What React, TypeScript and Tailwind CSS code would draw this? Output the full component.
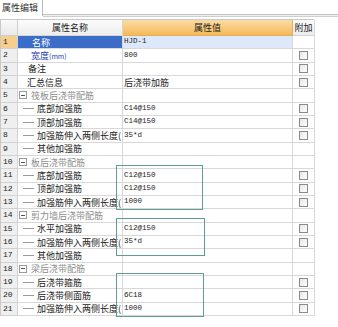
import React from "react";

type Row =
  | { kind: "item"; name: string; value?: string; nameColor?: string; check: boolean; selected?: boolean; indent: number }
  | { kind: "group"; name: string }
  | { kind: "child"; name: string; value?: string; check: boolean };

const LONG = "加强筋伸入两侧长度(";

const rows: Row[] = [
  { kind: "item", name: "名称", value: "HJD-1", check: false, selected: true, indent: 14 },
  { kind: "item", name: "宽度(mm)", value: "800", check: true, nameColor: "#1f3fb0", indent: 13 },
  { kind: "item", name: "备注", value: "", check: true, indent: 10 },
  { kind: "item", name: "汇总信息", value: "后浇带加筋", check: true, indent: 9 },
  { kind: "group", name: "筏板后浇带配筋" },
  { kind: "child", name: "底部加强筋", value: "C14@150", check: true },
  { kind: "child", name: "顶部加强筋", value: "C14@150", check: true },
  { kind: "child", name: LONG, value: "35*d", check: true },
  { kind: "child", name: "其他加强筋", value: "", check: false },
  { kind: "group", name: "板后浇带配筋" },
  { kind: "child", name: "底部加强筋", value: "C12@150", check: true },
  { kind: "child", name: "顶部加强筋", value: "C12@150", check: true },
  { kind: "child", name: LONG, value: "1000", check: true },
  { kind: "group", name: "剪力墙后浇带配筋" },
  { kind: "child", name: "水平加强筋", value: "C12@150", check: true },
  { kind: "child", name: LONG, value: "35*d", check: true },
  { kind: "child", name: "其他加强筋", value: "", check: false },
  { kind: "group", name: "梁后浇带配筋" },
  { kind: "child", name: "后浇带箍筋", value: "", check: true },
  { kind: "child", name: "后浇带侧面筋", value: "6C18", check: true },
  { kind: "child", name: LONG, value: "1000", check: true },
];

const cjk = { fontFamily: '"Noto Sans CJK SC", "Noto Sans", sans-serif' };
const mono = { fontFamily: '"Liberation Mono", "Noto Sans CJK SC", monospace' };

function isAscii(s: string) {
  return /^[\x00-\x7f]*$/.test(s);
}

function CheckBox() {
  return (
    <div className="w-[9px] h-[9px] border border-[#8a8a8a] bg-linear-to-br from-[#e6e6e6] to-white" />
  );
}

function RowView({ row, idx }: { row: Row; idx: number }) {
  const selected = row.kind === "item" && row.selected;
  return (
    <div className="grid grid-cols-[17px_105px_170px_22px] h-[13.33px] leading-none">
      <div
        className={`border-b border-r border-[#d2d2d2] flex items-center pl-[2px] text-[8px] text-[#222] ${
          selected ? "bg-[#f7cf8c]" : "bg-[#efefef]"
        }`}
        style={mono}
      >
        {idx + 1}
      </div>
      <div
        className={`border-b border-r border-[#d8d8d8] flex items-center overflow-hidden whitespace-nowrap min-w-0 ${
          selected ? "bg-[#3a6cc8]" : "bg-white"
        }`}
      >
        {row.kind === "item" && (
          <span
            className="text-[9px]"
            style={{
              ...cjk,
              paddingLeft: row.indent,
              color: selected ? "#ffffff" : row.nameColor ?? "#1a1a1a",
            }}
          >
            {row.name.includes("(mm)") ? (
              <>
                {row.name.replace("(mm)", "")}
                <span className="text-[7px]">(mm)</span>
              </>
            ) : (
              row.name
            )}
          </span>
        )}
        {row.kind === "group" && (
          <>
            <div className="ml-[1px] w-[8px] h-[8px] border border-[#9a9a9a] bg-white flex items-center justify-center shrink-0">
              <div className="w-[4px] h-px bg-[#555]" />
            </div>
            <span className="pl-[4px] text-[9px] text-[#8c8c8c]" style={cjk}>
              {row.name}
            </span>
          </>
        )}
        {row.kind === "child" && (
          <>
            <div className="ml-[5px] w-[11px] h-px bg-[#9a9a9a] shrink-0" />
            <span className="pl-[3px] text-[9px] text-[#1a1a1a]" style={cjk}>
              {row.name}
            </span>
          </>
        )}
      </div>
      <div
        className={`border-b border-r border-[#d8d8d8] flex items-center pl-[1px] overflow-hidden whitespace-nowrap ${
          selected ? "bg-[#dde9fb]" : "bg-white"
        }`}
      >
        {row.kind !== "group" && row.value ? (
          isAscii(row.value) ? (
            <span className="text-[7.5px] text-[#222]" style={mono}>
              {row.value}
            </span>
          ) : (
            <span className="text-[9px] text-[#1a1a1a]" style={cjk}>
              {row.value}
            </span>
          )
        ) : null}
      </div>
      <div className="border-b border-r border-[#d8d8d8] bg-white flex items-center justify-center">
        {row.kind !== "group" && row.check ? <CheckBox /> : null}
      </div>
    </div>
  );
}

export default function App() {
  return (
    <div className="relative w-[338px] h-[327px] bg-white overflow-hidden">
      {/* tab bar */}
      <div className="h-[19px] flex items-start">
        <div className="h-[16px] w-[43px] border-r border-[#b9b9b9] bg-white flex items-center pl-[2px]">
          <span className="text-[9px] text-[#333]" style={cjk}>
            属性编辑
          </span>
        </div>
        <div className="flex-1 flex flex-col">
          <div className="h-[14px] bg-white" />
          <div className="h-px bg-[#c4c4c4]" />
          <div className="h-px bg-[#f2f2f2]" />
          <div className="h-px bg-[#cfcfcf]" />
        </div>
      </div>

      {/* grid */}
      <div className="w-[314px] border-l border-t border-[#c8c8c8]">
        <div className="grid grid-cols-[17px_105px_170px_22px] h-[16px]">
          <div className="border-b border-r border-[#cfcfcf] bg-linear-to-b from-[#f9f9f9] to-[#e9e9e9]" />
          <div className="border-b border-r border-[#d6d6d6] bg-linear-to-b from-[#fcfcfc] to-[#ededed] flex items-center justify-center">
            <span className="text-[9px] text-[#222]" style={cjk}>
              属性名称
            </span>
          </div>
          <div className="border-b border-r border-[#e3b15c] bg-linear-to-b from-[#fbdca3] to-[#f4b955] flex items-center justify-center">
            <span className="text-[9px] text-[#222]" style={cjk}>
              属性值
            </span>
          </div>
          <div className="border-b border-r border-[#d6d6d6] bg-linear-to-b from-[#fbfbfb] to-[#ececec] flex items-center justify-center">
            <span className="text-[9px] text-[#222]" style={cjk}>
              附加
            </span>
          </div>
        </div>
        {rows.map((r, i) => (
          <RowView key={i} row={r} idx={i} />
        ))}
      </div>

      {/* annotation boxes */}
      <div className="absolute left-[116px] top-[165px] w-[87px] h-[45px] border border-[#5f9c95]" />
      <div className="absolute left-[116px] top-[218px] w-[89px] h-[38px] border border-[#5f9c95]" />
      <div className="absolute left-[116px] top-[273px] w-[88px] h-[44px] border border-[#5f9c95]" />
    </div>
  );
}
